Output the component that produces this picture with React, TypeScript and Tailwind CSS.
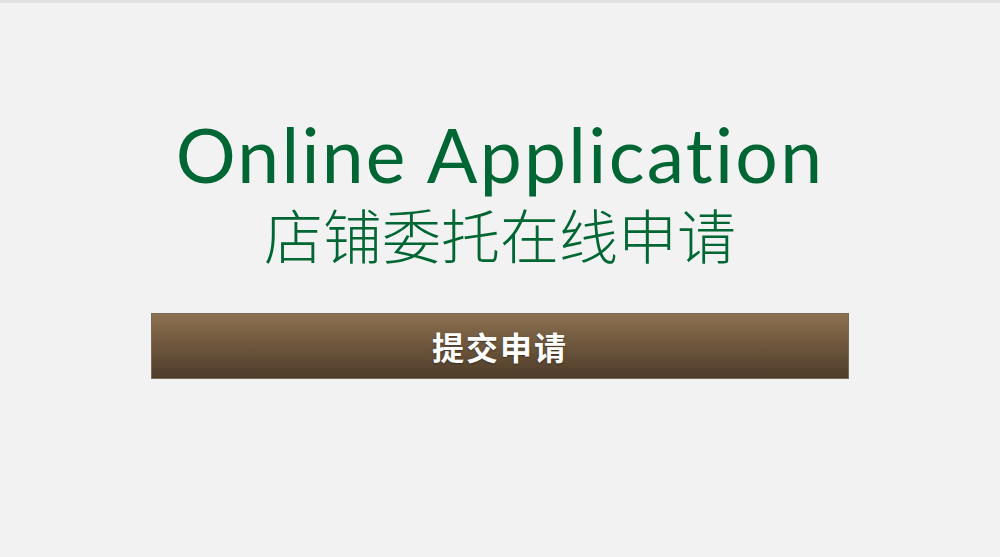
export default function App() {
  return (
    <div className="w-[1000px] h-[557px] bg-[#f2f2f2] flex flex-col overflow-hidden">
      <div className="h-[3px] bg-[#e1e1e1]" />
      <div className="flex flex-col items-center pt-[114px]">
        <h1
          className="text-[75px] leading-[75px] text-[#006633] tracking-[2.3px] font-normal"
          style={{ fontFamily: 'Lato, "Noto Sans", sans-serif' }}
        >
          Online Application
        </h1>
        <h2
          className="mt-[12px] text-[59px] leading-[59px] text-[#006633] font-light"
          style={{ fontFamily: '"Noto Sans CJK SC", sans-serif' }}
        >
          店铺委托在线申请
        </h2>
      </div>
      <div className="px-[151px] mt-[50px]">
        <button
          className="w-full h-[66px] border border-[#7a6a58] bg-gradient-to-b from-[#8d7150] to-[#4e3c2a] text-white text-[32px] tracking-[2px] font-bold flex items-center justify-center [text-shadow:0_1px_2px_rgba(0,0,0,0.4)]"
          style={{ fontFamily: '"Noto Sans CJK SC", sans-serif' }}
        >
          提交申请
        </button>
      </div>
    </div>
  );
}
